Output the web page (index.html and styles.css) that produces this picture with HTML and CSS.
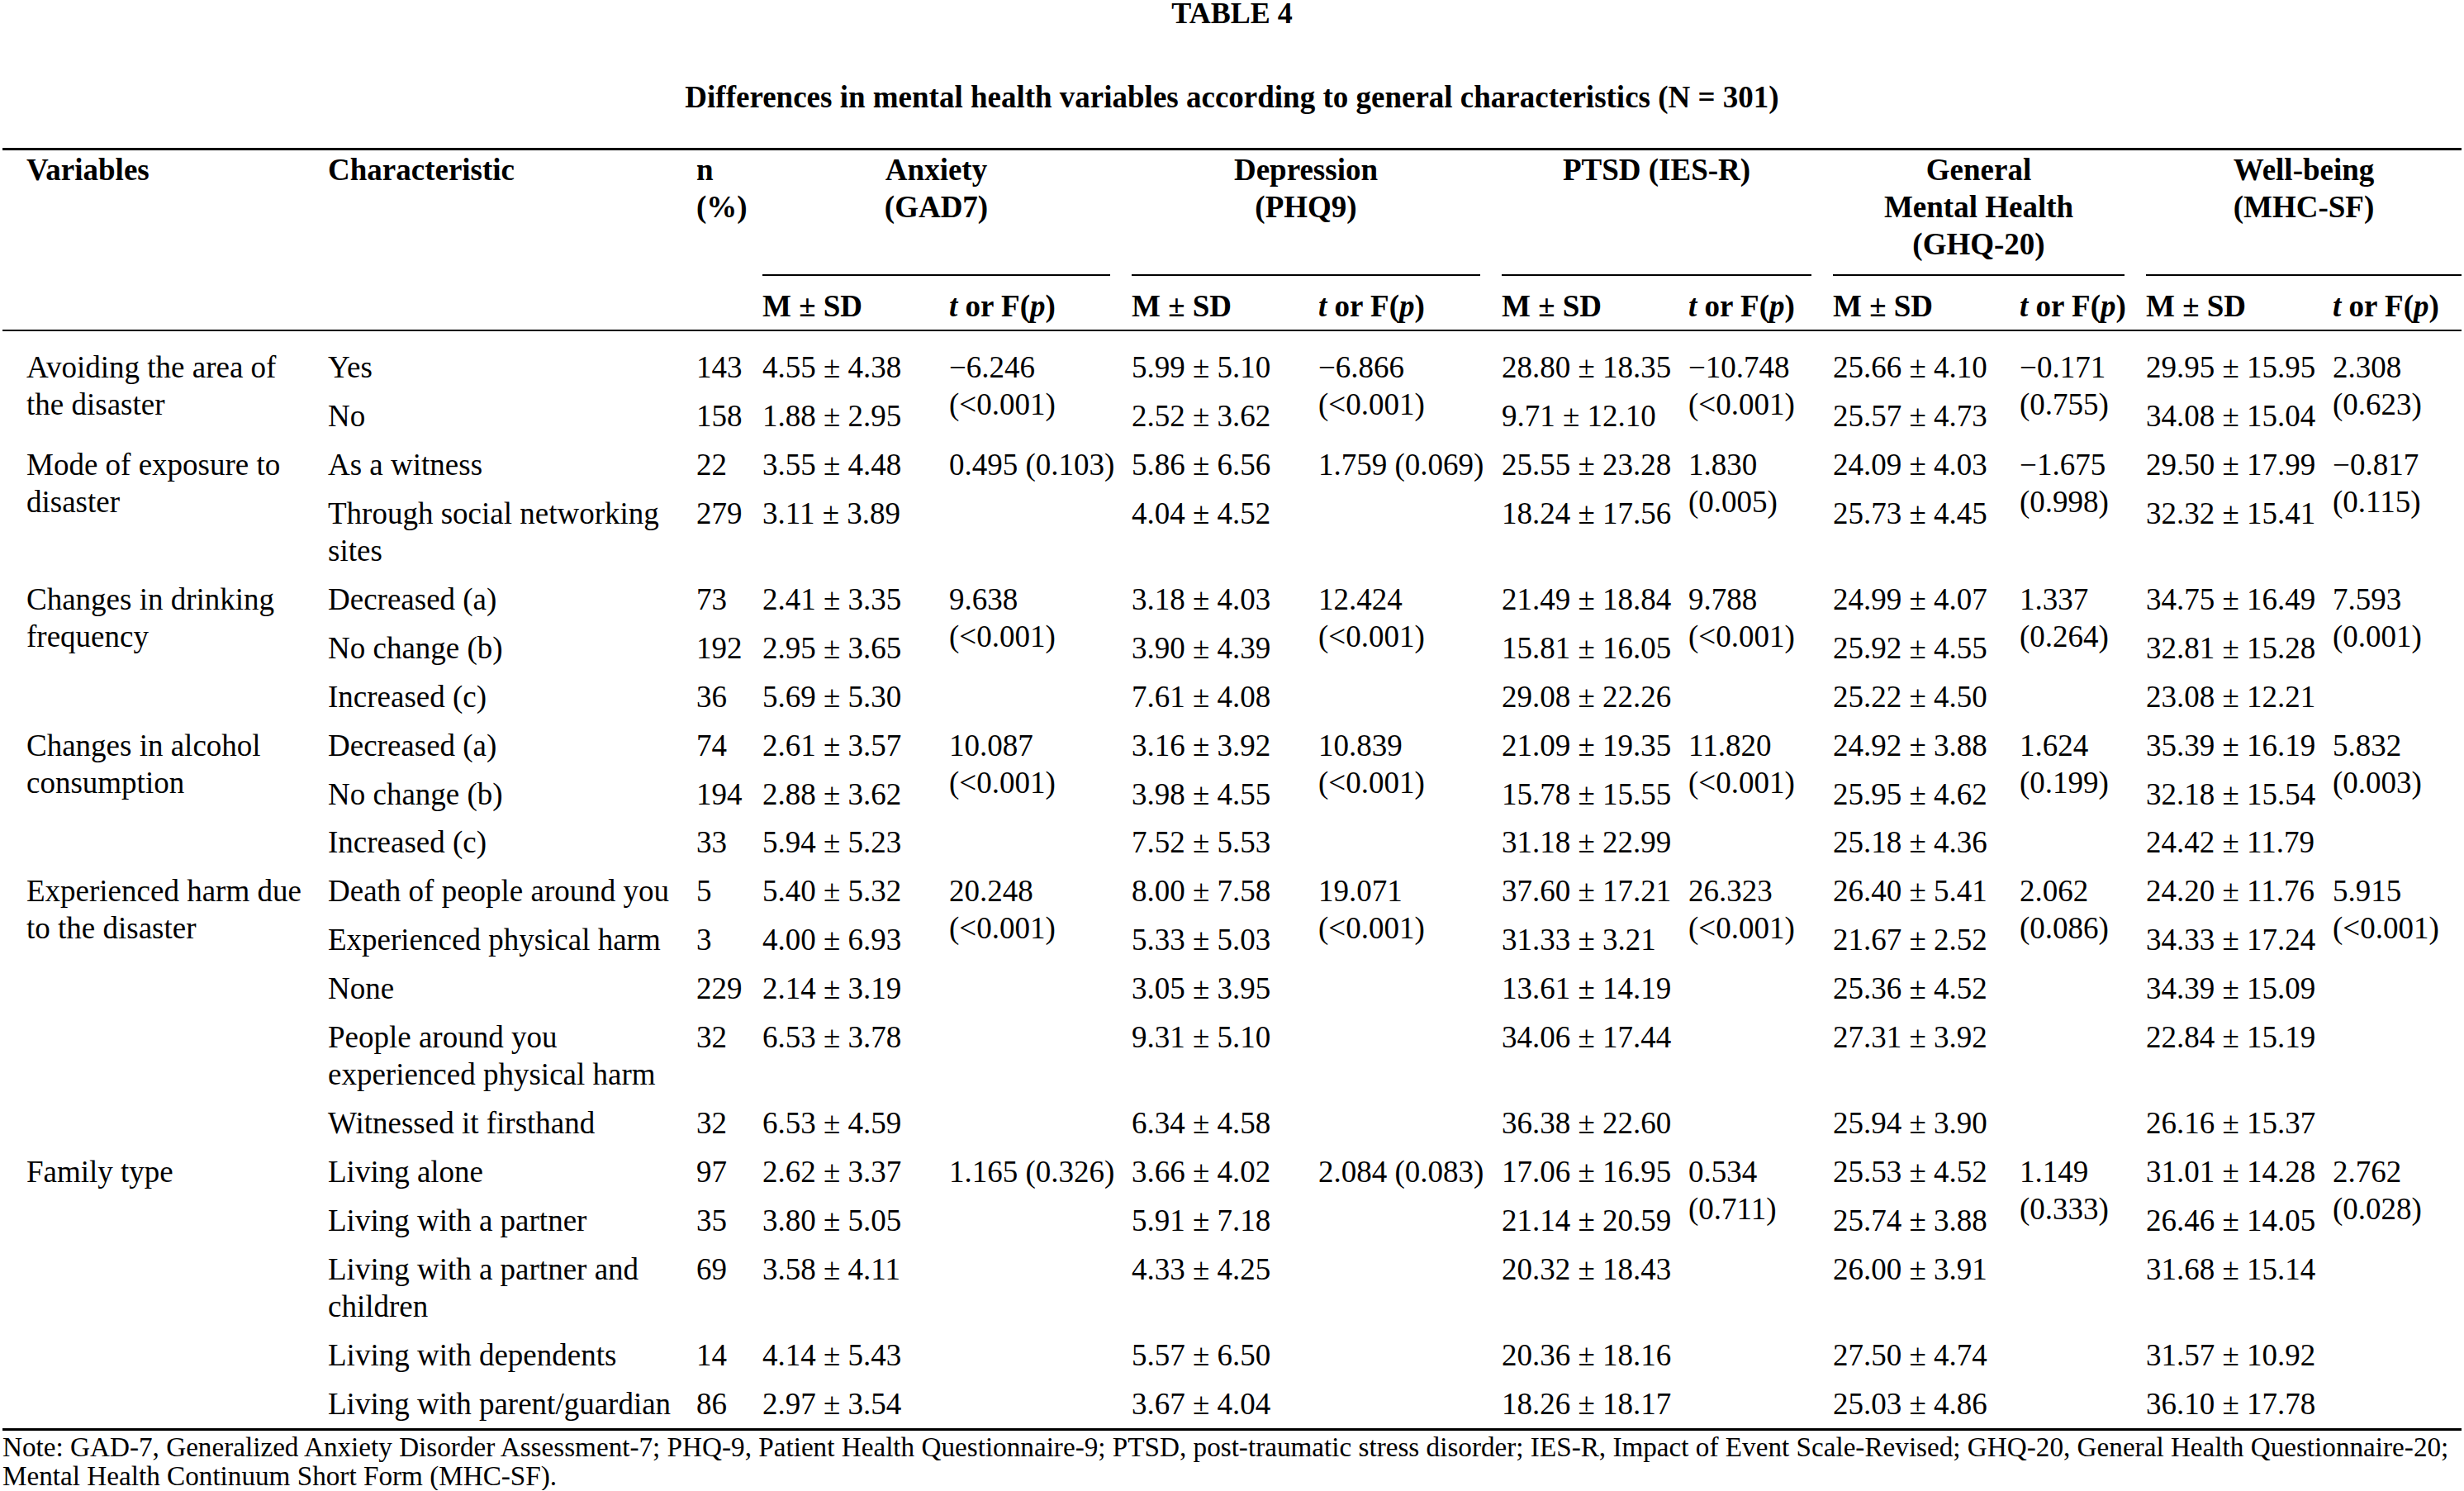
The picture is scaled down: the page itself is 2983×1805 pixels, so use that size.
FILE: index.html
```html
<!DOCTYPE html>
<html lang="en">
<head>
<meta charset="utf-8">
<title>Table 4</title>
<link rel="stylesheet" href="styles.css">
</head>
<body>
<div class="caption caption-label">TABLE 4</div>
<div class="caption caption-title">Differences in mental health variables according to general characteristics (N = 301)</div>
<table class="data-table">
  <colgroup>
    <col class="c-var"><col class="c-char"><col class="c-n">
    <col class="c-m"><col class="c-t1">
    <col class="c-m"><col class="c-t2">
    <col class="c-m"><col class="c-t3">
    <col class="c-m"><col class="c-t4">
    <col class="c-m"><col class="c-t5">
  </colgroup>
  <thead>
    <tr class="head-top">
      <th rowspan="2" class="var-cell span-head">Variables</th>
      <th rowspan="2" class="span-head">Characteristic</th>
      <th rowspan="2" class="span-head">n<br>(%)</th>
      <th colspan="2" class="group">Anxiety<br>(GAD7)</th>
      <th colspan="2" class="group">Depression<br>(PHQ9)</th>
      <th colspan="2" class="group">PTSD (IES-R)</th>
      <th colspan="2" class="group">General<br>Mental Health<br>(GHQ-20)</th>
      <th colspan="2" class="group">Well-being<br>(MHC-SF)</th>
    </tr>
    <tr class="head-sub">
      <th>M ± SD</th><th><i>t</i> or F(<i>p</i>)</th>
      <th>M ± SD</th><th><i>t</i> or F(<i>p</i>)</th>
      <th>M ± SD</th><th><i>t</i> or F(<i>p</i>)</th>
      <th>M ± SD</th><th><i>t</i> or F(<i>p</i>)</th>
      <th>M ± SD</th><th><i>t</i> or F(<i>p</i>)</th>
    </tr>
  </thead>
  <tbody>
    <tr>
      <td rowspan="2" class="var-cell">Avoiding the area of<br>the disaster</td>
      <td>Yes</td><td>143</td>
      <td>4.55 ± 4.38</td><td rowspan="2">−6.246<br>(&lt;0.001)</td>
      <td>5.99 ± 5.10</td><td rowspan="2">−6.866<br>(&lt;0.001)</td>
      <td>28.80 ± 18.35</td><td rowspan="2">−10.748<br>(&lt;0.001)</td>
      <td>25.66 ± 4.10</td><td rowspan="2">−0.171<br>(0.755)</td>
      <td>29.95 ± 15.95</td><td rowspan="2">2.308<br>(0.623)</td>
    </tr>
    <tr>
      <td>No</td><td>158</td>
      <td>1.88 ± 2.95</td><td>2.52 ± 3.62</td><td>9.71 ± 12.10</td><td>25.57 ± 4.73</td><td>34.08 ± 15.04</td>
    </tr>

    <tr>
      <td rowspan="2" class="var-cell">Mode of exposure to<br>disaster</td>
      <td>As a witness</td><td>22</td>
      <td>3.55 ± 4.48</td><td rowspan="2">0.495 (0.103)</td>
      <td>5.86 ± 6.56</td><td rowspan="2">1.759 (0.069)</td>
      <td>25.55 ± 23.28</td><td rowspan="2">1.830<br>(0.005)</td>
      <td>24.09 ± 4.03</td><td rowspan="2">−1.675<br>(0.998)</td>
      <td>29.50 ± 17.99</td><td rowspan="2">−0.817<br>(0.115)</td>
    </tr>
    <tr>
      <td>Through social networking<br>sites</td><td>279</td>
      <td>3.11 ± 3.89</td><td>4.04 ± 4.52</td><td>18.24 ± 17.56</td><td>25.73 ± 4.45</td><td>32.32 ± 15.41</td>
    </tr>

    <tr>
      <td rowspan="3" class="var-cell">Changes in drinking<br>frequency</td>
      <td>Decreased (a)</td><td>73</td>
      <td>2.41 ± 3.35</td><td rowspan="3">9.638<br>(&lt;0.001)</td>
      <td>3.18 ± 4.03</td><td rowspan="3">12.424<br>(&lt;0.001)</td>
      <td>21.49 ± 18.84</td><td rowspan="3">9.788<br>(&lt;0.001)</td>
      <td>24.99 ± 4.07</td><td rowspan="3">1.337<br>(0.264)</td>
      <td>34.75 ± 16.49</td><td rowspan="3">7.593<br>(0.001)</td>
    </tr>
    <tr>
      <td>No change (b)</td><td>192</td>
      <td>2.95 ± 3.65</td><td>3.90 ± 4.39</td><td>15.81 ± 16.05</td><td>25.92 ± 4.55</td><td>32.81 ± 15.28</td>
    </tr>
    <tr>
      <td>Increased (c)</td><td>36</td>
      <td>5.69 ± 5.30</td><td>7.61 ± 4.08</td><td>29.08 ± 22.26</td><td>25.22 ± 4.50</td><td>23.08 ± 12.21</td>
    </tr>

    <tr>
      <td rowspan="3" class="var-cell">Changes in alcohol<br>consumption</td>
      <td>Decreased (a)</td><td>74</td>
      <td>2.61 ± 3.57</td><td rowspan="3">10.087<br>(&lt;0.001)</td>
      <td>3.16 ± 3.92</td><td rowspan="3">10.839<br>(&lt;0.001)</td>
      <td>21.09 ± 19.35</td><td rowspan="3">11.820<br>(&lt;0.001)</td>
      <td>24.92 ± 3.88</td><td rowspan="3">1.624<br>(0.199)</td>
      <td>35.39 ± 16.19</td><td rowspan="3">5.832<br>(0.003)</td>
    </tr>
    <tr>
      <td>No change (b)</td><td>194</td>
      <td>2.88 ± 3.62</td><td>3.98 ± 4.55</td><td>15.78 ± 15.55</td><td>25.95 ± 4.62</td><td>32.18 ± 15.54</td>
    </tr>
    <tr>
      <td>Increased (c)</td><td>33</td>
      <td>5.94 ± 5.23</td><td>7.52 ± 5.53</td><td>31.18 ± 22.99</td><td>25.18 ± 4.36</td><td>24.42 ± 11.79</td>
    </tr>

    <tr>
      <td rowspan="5" class="var-cell">Experienced harm due<br>to the disaster</td>
      <td>Death of people around you</td><td>5</td>
      <td>5.40 ± 5.32</td><td rowspan="5">20.248<br>(&lt;0.001)</td>
      <td>8.00 ± 7.58</td><td rowspan="5">19.071<br>(&lt;0.001)</td>
      <td>37.60 ± 17.21</td><td rowspan="5">26.323<br>(&lt;0.001)</td>
      <td>26.40 ± 5.41</td><td rowspan="5">2.062<br>(0.086)</td>
      <td>24.20 ± 11.76</td><td rowspan="5">5.915<br>(&lt;0.001)</td>
    </tr>
    <tr>
      <td>Experienced physical harm</td><td>3</td>
      <td>4.00 ± 6.93</td><td>5.33 ± 5.03</td><td>31.33 ± 3.21</td><td>21.67 ± 2.52</td><td>34.33 ± 17.24</td>
    </tr>
    <tr>
      <td>None</td><td>229</td>
      <td>2.14 ± 3.19</td><td>3.05 ± 3.95</td><td>13.61 ± 14.19</td><td>25.36 ± 4.52</td><td>34.39 ± 15.09</td>
    </tr>
    <tr>
      <td>People around you<br>experienced physical harm</td><td>32</td>
      <td>6.53 ± 3.78</td><td>9.31 ± 5.10</td><td>34.06 ± 17.44</td><td>27.31 ± 3.92</td><td>22.84 ± 15.19</td>
    </tr>
    <tr>
      <td>Witnessed it firsthand</td><td>32</td>
      <td>6.53 ± 4.59</td><td>6.34 ± 4.58</td><td>36.38 ± 22.60</td><td>25.94 ± 3.90</td><td>26.16 ± 15.37</td>
    </tr>

    <tr>
      <td rowspan="5" class="var-cell">Family type</td>
      <td>Living alone</td><td>97</td>
      <td>2.62 ± 3.37</td><td rowspan="5">1.165 (0.326)</td>
      <td>3.66 ± 4.02</td><td rowspan="5">2.084 (0.083)</td>
      <td>17.06 ± 16.95</td><td rowspan="5">0.534<br>(0.711)</td>
      <td>25.53 ± 4.52</td><td rowspan="5">1.149<br>(0.333)</td>
      <td>31.01 ± 14.28</td><td rowspan="5">2.762<br>(0.028)</td>
    </tr>
    <tr>
      <td>Living with a partner</td><td>35</td>
      <td>3.80 ± 5.05</td><td>5.91 ± 7.18</td><td>21.14 ± 20.59</td><td>25.74 ± 3.88</td><td>26.46 ± 14.05</td>
    </tr>
    <tr>
      <td>Living with a partner and<br>children</td><td>69</td>
      <td>3.58 ± 4.11</td><td>4.33 ± 4.25</td><td>20.32 ± 18.43</td><td>26.00 ± 3.91</td><td>31.68 ± 15.14</td>
    </tr>
    <tr>
      <td>Living with dependents</td><td>14</td>
      <td>4.14 ± 5.43</td><td>5.57 ± 6.50</td><td>20.36 ± 18.16</td><td>27.50 ± 4.74</td><td>31.57 ± 10.92</td>
    </tr>
    <tr>
      <td>Living with parent/guardian</td><td>86</td>
      <td>2.97 ± 3.54</td><td>3.67 ± 4.04</td><td>18.26 ± 18.17</td><td>25.03 ± 4.86</td><td>36.10 ± 17.78</td>
    </tr>
  </tbody>
</table>
<p class="note">Note: GAD-7, Generalized Anxiety Disorder Assessment-7; PHQ-9, Patient Health Questionnaire-9; PTSD, post-traumatic stress disorder; IES-R, Impact of Event Scale-Revised; GHQ-20, General Health Questionnaire-20;<br>Mental Health Continuum Short Form (MHC-SF).</p>
</body>
</html>
```

FILE: styles.css
```css
html, body {
  margin: 0;
  padding: 0;
  background: #ffffff;
}

body {
  font-family: "Liberation Serif", "Times New Roman", serif;
  color: #000000;
  font-size: 37px;
}

.caption {
  text-align: center;
  font-weight: bold;
  font-size: 36px;
  line-height: 30px;
}

.caption-label {
  padding-top: 1px;
}

.caption-title {
  margin-top: 72px;
  font-size: 37px;
}

.data-table {
  margin: 46px 0 0 3px;
  width: 2977px;
  table-layout: fixed;
  border-collapse: separate;
  border-spacing: 0;
  border-top: 3px solid #000000;
  border-bottom: 3px solid #000000;
  line-height: 45px;
}

.c-var { width: 368px; }
.c-char { width: 446px; }
.c-n { width: 80px; }
.c-m { width: 226px; }
.c-t1 { width: 221px; }
.c-t2 { width: 222px; }
.c-t3 { width: 175px; }
.c-t4 { width: 153px; }
.c-t5 { width: 182px; }

.data-table th,
.data-table td {
  padding: 7px 0 6.95px 26px;
  text-align: left;
  vertical-align: top;
  white-space: nowrap;
}

.data-table th {
  font-weight: bold;
}

.data-table .var-cell {
  padding-left: 29px;
}

.head-top th {
  padding-top: 1px;
}

.head-top .group {
  text-align: center;
  padding-bottom: 16px;
  background-image: linear-gradient(#000000, #000000);
  background-repeat: no-repeat;
  background-size: calc(100% - 26px) 2px;
  background-position: right bottom;
}

.head-top .span-head {
  border-bottom: 2px solid #000000;
}

.head-sub th {
  padding-top: 14px;
  padding-bottom: 6px;
  border-bottom: 2px solid #000000;
}

.data-table tbody tr:first-child > td {
  padding-top: 21px;
}

.note {
  margin: 2px 0 0 3px;
  font-size: 33.2px;
  line-height: 35px;
  white-space: nowrap;
}
```
